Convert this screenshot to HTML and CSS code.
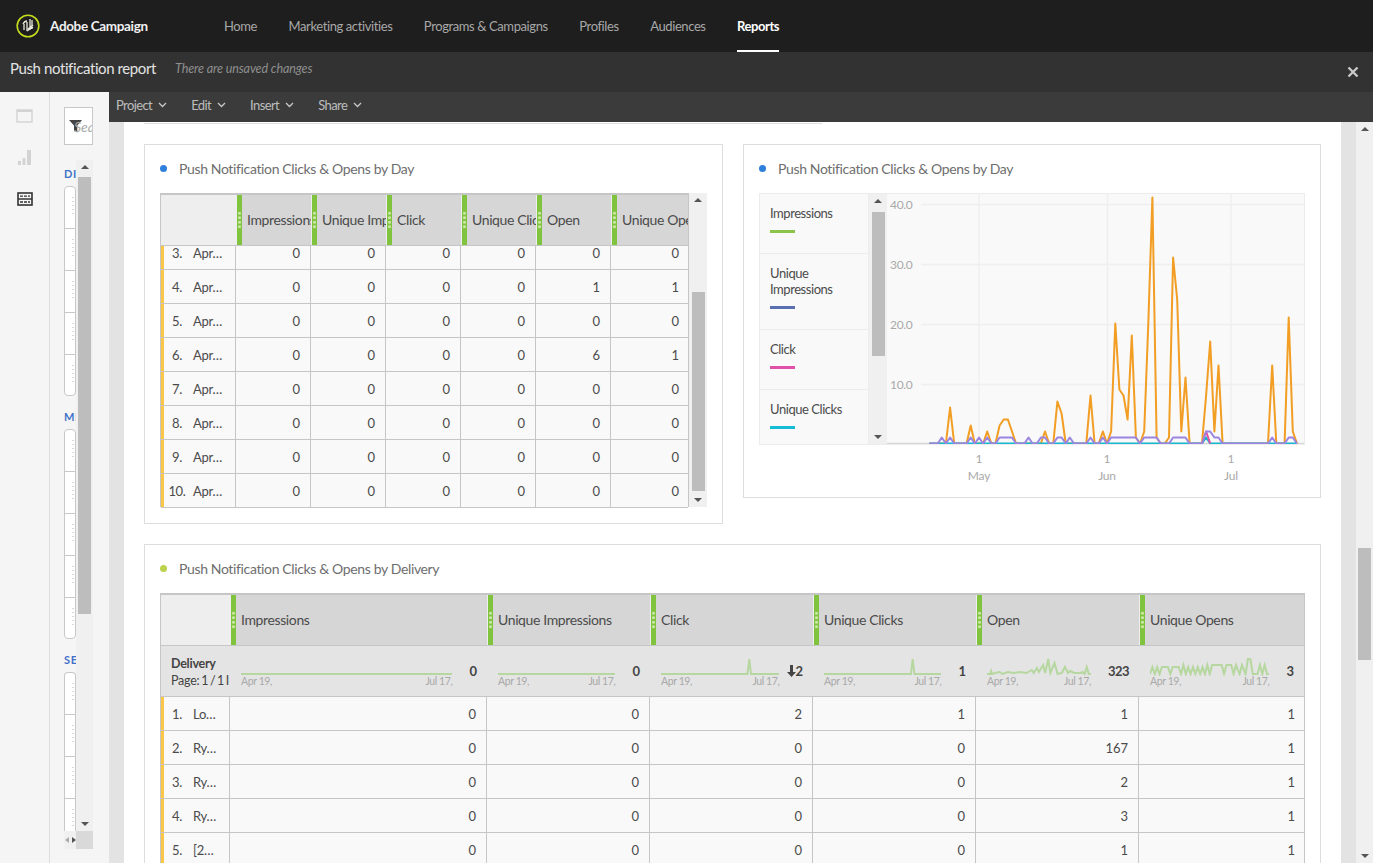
FILE: index.html
```html
<!DOCTYPE html>
<html lang="en">
<head>
<meta charset="utf-8">
<title>Push notification report</title>
<link rel="stylesheet" href="styles.css">
</head>
<body>
<header class="topbar">
  <div class="brand">
    <svg class="logo" width="24" height="24" viewBox="0 0 24 24"><circle cx="12" cy="12" r="10.8" fill="none" stroke="#c5dc1e" stroke-width="1.6"/><path d="M7 10c1-2 3-3 4-3M8 10v6M11 8v9M14 5v11M16 6v9M11 17l6-4M12 15l5-4" fill="none" stroke="#e8e8dc" stroke-width="1.3"/></svg>
    <span class="brand-name">Adobe Campaign</span>
  </div>
  <nav class="nav">
    <a>Home</a><a>Marketing activities</a><a>Programs &amp; Campaigns</a><a>Profiles</a><a>Audiences</a><a class="active">Reports</a>
  </nav>
</header>
<div class="titlebar">
  <span class="report-title">Push notification report</span>
  <span class="unsaved">There are unsaved changes</span>
  <svg class="close" width="12" height="12" viewBox="0 0 12 12"><path d="M1.5 1.5l9 9M10.5 1.5l-9 9" stroke="#c8c8c8" stroke-width="2.4"/></svg>
</div>
<div class="workspace">
  <aside class="rail">
    <svg class="rail-icon" width="17" height="14" viewBox="0 0 17 14"><rect x="1" y="1" width="15" height="12" fill="none" stroke="#d3d3d3" stroke-width="1.4"/><path d="M1 2h15" stroke="#d3d3d3" stroke-width="2"/></svg>
    <svg class="rail-icon" width="17" height="17" viewBox="0 0 17 17"><path d="M2 12h3v4H2zM6.5 9h3v7h-3zM11 1h4v15h-4z" fill="#d3d3d3"/></svg>
    <svg class="rail-icon" width="16" height="14" viewBox="0 0 16 14"><rect x="1" y="1" width="14" height="12" fill="none" stroke="#333" stroke-width="1.6"/><path d="M1 7h14" stroke="#333" stroke-width="1.5"/><path d="M3 4.2h10M3 10h10" stroke="#333" stroke-width="1.3" stroke-dasharray="3 1"/></svg>
  </aside>
  <aside class="panel">
    <div class="search">
      <svg width="14" height="14" viewBox="0 0 14 14"><path d="M0 1h13L8.3 6.5V13.5L5 12V6.5z" fill="#444"/></svg>
      <span class="search-text">Search</span>
    </div>
    <div class="panel-scroll">
      <div class="panel-list">
        <h4 class="section section-first">DIMENSIONS</h4>
        <div class="chips chips-full">
          <div class="chip"></div><div class="chip"></div><div class="chip"></div><div class="chip"></div><div class="chip"></div>
        </div>
        <h4 class="section">METRICS</h4>
        <div class="chips chips-full">
          <div class="chip"></div><div class="chip"></div><div class="chip"></div><div class="chip"></div><div class="chip"></div>
        </div>
        <h4 class="section">SEGMENTS</h4>
        <div class="chips">
          <div class="chip"></div><div class="chip"></div><div class="chip"></div><div class="chip"></div><div class="chip"></div>
        </div>
      </div>
      <div class="vscroll panel-vscroll">
        <span class="arrow-up"></span>
        <span class="panel-thumb"></span>
        <span class="arrow-down"></span>
      </div>
    </div>
    <div class="panel-hscroll">
      <span class="hs-left"></span><span class="hs-right"></span><span class="hs-corner"></span>
    </div>
  </aside>
  <div class="main">
    <div class="toolbar">
      <a class="menu">Project<svg width="9" height="6" viewBox="0 0 9 6"><path d="M1 1l3.5 3.5L8 1" fill="none" stroke="#c8c8c8" stroke-width="1.3"/></svg></a>
      <a class="menu">Edit<svg width="9" height="6" viewBox="0 0 9 6"><path d="M1 1l3.5 3.5L8 1" fill="none" stroke="#c8c8c8" stroke-width="1.3"/></svg></a>
      <a class="menu">Insert<svg width="9" height="6" viewBox="0 0 9 6"><path d="M1 1l3.5 3.5L8 1" fill="none" stroke="#c8c8c8" stroke-width="1.3"/></svg></a>
      <a class="menu">Share<svg width="9" height="6" viewBox="0 0 9 6"><path d="M1 1l3.5 3.5L8 1" fill="none" stroke="#c8c8c8" stroke-width="1.3"/></svg></a>
    </div>
    <div class="stage">
      <div class="gutter"></div>
      <div class="canvas">
        <div class="stub"></div>
        <div class="card-row">
          <section class="card card-table">
            <h3 class="card-title"><i class="dot dot-blue"></i>Push Notification Clicks &amp; Opens by Day</h3>
            <div class="table-wrap">
              <div class="table t1">
                <div class="row head t1-cols">
                  <div class="corner"></div>
                  <div class="hcell"><i class="grip"></i><span>Impressions</span></div>
                  <div class="hcell"><i class="grip"></i><span>Unique Impressions</span></div>
                  <div class="hcell"><i class="grip"></i><span>Click</span></div>
                  <div class="hcell"><i class="grip"></i><span>Unique Clicks</span></div>
                  <div class="hcell"><i class="grip"></i><span>Open</span></div>
                  <div class="hcell"><i class="grip"></i><span>Unique Opens</span></div>
                </div>
                <div class="rows-clip">
                  <div class="rows-offset">
                    <div class="row data t1-cols"><div class="label"><b>3.</b><span>Apr…</span></div><div>0</div><div>0</div><div>0</div><div>0</div><div>0</div><div>0</div></div>
                    <div class="row data t1-cols"><div class="label"><b>4.</b><span>Apr…</span></div><div>0</div><div>0</div><div>0</div><div>0</div><div>1</div><div>1</div></div>
                    <div class="row data t1-cols"><div class="label"><b>5.</b><span>Apr…</span></div><div>0</div><div>0</div><div>0</div><div>0</div><div>0</div><div>0</div></div>
                    <div class="row data t1-cols"><div class="label"><b>6.</b><span>Apr…</span></div><div>0</div><div>0</div><div>0</div><div>0</div><div>6</div><div>1</div></div>
                    <div class="row data t1-cols"><div class="label"><b>7.</b><span>Apr…</span></div><div>0</div><div>0</div><div>0</div><div>0</div><div>0</div><div>0</div></div>
                    <div class="row data t1-cols"><div class="label"><b>8.</b><span>Apr…</span></div><div>0</div><div>0</div><div>0</div><div>0</div><div>0</div><div>0</div></div>
                    <div class="row data t1-cols"><div class="label"><b>9.</b><span>Apr…</span></div><div>0</div><div>0</div><div>0</div><div>0</div><div>0</div><div>0</div></div>
                    <div class="row data t1-cols"><div class="label"><b>10.</b><span>Apr…</span></div><div>0</div><div>0</div><div>0</div><div>0</div><div>0</div><div>0</div></div>
                  </div>
                </div>
              </div>
              <div class="vscroll table-vscroll">
                <span class="arrow-up"></span>
                <span class="table-thumb"></span>
                <span class="arrow-down"></span>
              </div>
            </div>
          </section>
          <section class="card card-chart">
            <h3 class="card-title"><i class="dot dot-blue"></i>Push Notification Clicks &amp; Opens by Day</h3>
            <div class="chart">
              <div class="legend">
                <div class="legend-item li-1">Impressions<i class="swatch sw-green"></i></div>
                <div class="legend-item li-2">Unique Impressions<i class="swatch sw-indigo"></i></div>
                <div class="legend-item li-1">Click<i class="swatch sw-pink"></i></div>
                <div class="legend-item li-3">Unique Clicks<i class="swatch sw-cyan"></i></div>
              </div>
              <div class="vscroll legend-vscroll">
                <span class="arrow-up"></span>
                <span class="legend-thumb"></span>
                <span class="arrow-down"></span>
              </div>
              <div class="plot-wrap">
                <svg class="plot" width="418" height="250" viewBox="887 194 418 250">
                  <g stroke="#efefef" stroke-width="1.5">
                    <path d="M921 204.5H1305M921 264.5H1305M921 324.5H1305M921 384.5H1305M979 193V444M1107.5 193V444M1231 193V444"/>
                  </g>
                  <path d="M887 443.5H1305" stroke="#d8d8d8" stroke-width="1.5"/>
                  <g class="ylabels">
                    <text x="890" y="209">40.0</text>
                    <text x="890" y="269">30.0</text>
                    <text x="890" y="329">20.0</text>
                    <text x="890" y="389">10.0</text>
                  </g>
                  <g class="lines">
                    <polyline class="ln ln-orange" points="929.4,444 945.9,444 950.1,408 954.2,444 966.6,444 970.7,426 974.8,444 983.1,444 987.2,432 991.4,444 995.5,444 999.6,426 1003.7,420 1007.9,420 1012,432 1016.1,444 1040.9,444 1045,432 1049.2,444 1053.3,444 1057.4,402 1061.6,414 1065.7,444 1086.3,444 1090.5,396 1094.6,444 1098.7,444 1102.9,432 1107,444 1111.1,432 1115.3,324 1119.4,390 1123.5,396 1127.6,420 1131.8,336 1135.9,438 1140,444 1144.2,432 1148.3,324 1152.4,198 1156.6,438 1160.7,444 1164.8,444 1169,438 1173.1,258 1177.2,300 1181.3,432 1185.5,378 1189.6,444 1202,444 1206.1,396 1210.2,342 1214.4,432 1218.5,366 1222.6,444 1268,444 1272.2,366 1276.3,444 1284.6,444 1288.7,318 1292.8,432 1297,444"/>
                    <polyline class="ln ln-cyan" points="929.4,444 1202,444 1206.1,438 1210.2,444 1297,444"/>
                    <polyline class="ln ln-pink" points="1202,444 1206.1,432 1210.2,444"/>
                    <polyline class="ln ln-purple" points="929.4,444 937.7,444 941.8,438 945.9,444 950.1,438 954.2,444 966.6,444 970.7,438 974.8,444 979,438 983.1,444 987.2,438 991.4,444 995.5,444 999.6,438 1012,438 1016.1,444 1024.4,444 1028.5,438 1032.6,444 1036.8,444 1040.9,438 1045,438 1049.2,444 1053.3,444 1057.4,438 1061.6,438 1065.7,444 1069.8,438 1074,444 1086.3,444 1090.5,438 1094.6,444 1098.7,444 1102.9,438 1107,444 1111.1,438 1135.9,438 1140,444 1144.2,438 1156.6,438 1160.7,444 1169,444 1173.1,438 1185.5,438 1189.6,444 1202,444 1206.1,432 1210.2,432 1214.4,438 1218.5,438 1222.6,444 1268,444 1272.2,438 1276.3,444 1284.6,444 1288.7,438 1292.8,438 1297,444"/>
                  </g>
                </svg>
              </div>
            </div>
            <div class="axis">
              <span class="tick tick-may">1<br>May</span>
              <span class="tick tick-jun">1<br>Jun</span>
              <span class="tick tick-jul">1<br>Jul</span>
            </div>
          </section>
        </div>
        <section class="card card-wide">
          <h3 class="card-title"><i class="dot dot-lime"></i>Push Notification Clicks &amp; Opens by Delivery</h3>
          <div class="table t2">
            <div class="row head t2-cols">
              <div class="corner"></div>
              <div class="hcell"><i class="grip"></i><span>Impressions</span></div>
              <div class="hcell"><i class="grip"></i><span>Unique Impressions</span></div>
              <div class="hcell"><i class="grip"></i><span>Click</span></div>
              <div class="hcell"><i class="grip"></i><span>Unique Clicks</span></div>
              <div class="hcell"><i class="grip"></i><span>Open</span></div>
              <div class="hcell"><i class="grip"></i><span>Unique Opens</span></div>
            </div>
            <div class="row summary t2-cols">
              <div class="sum-label"><strong>Delivery</strong><span>Page: 1 / 1 I</span></div>
              <div class="sum-cell">
                <div class="spark"><svg viewBox="0 0 100 18" preserveAspectRatio="none"><polyline points="0,16 100,16"/></svg><div class="dates"><span>Apr 19,</span><span>Jul 17,</span></div></div>
                <b>0</b>
              </div>
              <div class="sum-cell">
                <div class="spark"><svg viewBox="0 0 100 18" preserveAspectRatio="none"><polyline points="0,16 100,16"/></svg><div class="dates"><span>Apr 19,</span><span>Jul 17,</span></div></div>
                <b>0</b>
              </div>
              <div class="sum-cell sum-tight">
                <div class="spark"><svg viewBox="0 0 100 18" preserveAspectRatio="none"><polyline points="0,16 73,16 74.5,1 76,16 100,16"/></svg><div class="dates"><span>Apr 19,</span><span>Jul 17,</span></div></div>
                <b><svg class="down" width="9" height="12" viewBox="0 0 9 12"><path d="M3 0h3v7h3l-4.5 5L0 7h3z" fill="#444"/></svg>2</b>
              </div>
              <div class="sum-cell">
                <div class="spark"><svg viewBox="0 0 100 18" preserveAspectRatio="none"><polyline points="0,16 74,16 75.5,1 77,16 100,16"/></svg><div class="dates"><span>Apr 19,</span><span>Jul 17,</span></div></div>
                <b>1</b>
              </div>
              <div class="sum-cell">
                <div class="spark"><svg viewBox="0 0 100 18" preserveAspectRatio="none"><polyline points="0,16 3,16 4,13 5,16 8,15 12,14 15,16 20,14 26,15 32,14 38,15 43,12 45,15 48,10 50,14 54,7 56,15 59,1 61,15 65,5 68,16 72,15 75,9 78,15 80,13 84,15 90,15 92,14 94,16 96,9 98,16 100,16"/></svg><div class="dates"><span>Apr 19,</span><span>Jul 17,</span></div></div>
                <b class="num-tight">323</b>
              </div>
              <div class="sum-cell sum-last">
                <div class="spark"><svg viewBox="0 0 100 18" preserveAspectRatio="none"><polyline points="0,16 2,9 4,16 6,9 8,16 10,9 15,9 17,16 19,9 24,9 26,16 28,7 30,16 32,9 34,16 36,9 38,16 40,9 42,16 44,9 46,16 48,7 50,16 52,7 60,7 62,16 64,7 68,7 70,16 72,7 75,16 77,7 80,16 82,1 84,1 86,16 90,16 92,7 94,16 96,7 98,16 100,16"/></svg><div class="dates"><span>Apr 19,</span><span>Jul 17,</span></div></div>
                <b>3</b>
              </div>
            </div>
            <div class="row data t2-cols"><div class="label"><b>1.</b><span>Lo…</span></div><div>0</div><div>0</div><div>2</div><div>1</div><div>1</div><div>1</div></div>
            <div class="row data t2-cols"><div class="label"><b>2.</b><span>Ry…</span></div><div>0</div><div>0</div><div>0</div><div>0</div><div>167</div><div>1</div></div>
            <div class="row data t2-cols"><div class="label"><b>3.</b><span>Ry…</span></div><div>0</div><div>0</div><div>0</div><div>0</div><div>2</div><div>1</div></div>
            <div class="row data t2-cols"><div class="label"><b>4.</b><span>Ry…</span></div><div>0</div><div>0</div><div>0</div><div>0</div><div>3</div><div>1</div></div>
            <div class="row data t2-cols"><div class="label"><b>5.</b><span>[2…</span></div><div>0</div><div>0</div><div>0</div><div>0</div><div>1</div><div>1</div></div>
          </div>
        </section>
      </div>
      <div class="gutter"></div>
      <div class="vscroll page-vscroll">
        <span class="arrow-up"></span>
        <span class="page-thumb"></span>
        <span class="arrow-down"></span>
      </div>
    </div>
  </div>
</div>
</body>
</html>
```
FILE: styles.css
```css
* { box-sizing: border-box; }
html, body { margin: 0; height: 100%; }
body {
  display: flex;
  flex-direction: column;
  height: 863px;
  overflow: hidden;
  font-family: "Lato", "Open Sans", sans-serif;
  font-size: 13px;
  color: #4b4b4b;
  background: #fff;
}
/* top bar */
.topbar {
  flex: 0 0 52px;
  display: flex;
  align-items: stretch;
  background: #1e1e1e;
}
.brand {
  width: 224px;
  display: flex;
  align-items: center;
  padding-left: 16px;
  gap: 10px;
}
.brand-name { color: #f0f0f0; font-size: 13.5px; font-weight: 700; letter-spacing: -.35px; }
.nav { display: flex; gap: 31.5px; }
.nav a {
  display: flex;
  align-items: center;
  color: #a8a8a8;
  font-size: 13px;
  letter-spacing: -.4px;
  border-bottom: 2px solid transparent;
  border-top: 2px solid transparent;
}
.nav a.active { color: #fff; font-weight: 700; border-bottom-color: #fff; letter-spacing: -.45px; }
/* title bar */
.titlebar {
  flex: 0 0 40px;
  display: flex;
  align-items: center;
  background: #323232;
  padding: 0 14px 8px 10px;
}
.report-title { color: #e3e3e3; font-size: 15px; letter-spacing: -.4px; }
.unsaved { color: #8f8f8f; font-style: italic; font-size: 12.5px; margin-left: 19px; letter-spacing: -.1px; }
.close { margin-left: auto; margin-top: 8px; }
/* workspace */
.workspace { flex: 1; display: flex; min-height: 0; }
.rail {
  flex: 0 0 50px;
  background: #f5f5f5;
  border-right: 1px solid #ddd;
  display: flex;
  flex-direction: column;
  align-items: center;
  padding: 17px 0 0 0;
  gap: 26px;
}
.panel {
  flex: 0 0 59px;
  background: #f5f5f5;
  padding: 15px 0 0 14px;
  display: flex;
  flex-direction: column;
}
.search {
  width: 29px;
  height: 38px;
  flex: none;
  background: #fff;
  border: 1px solid #c8c8c8;
  display: flex;
  align-items: center;
  padding-left: 4px;
  overflow: hidden;
  white-space: nowrap;
}
.search svg { flex: none; margin-right: -9px; }
.search-text { color: #aaa; font-style: italic; font-size: 14px; }
.panel-scroll {
  margin-top: 15px;
  width: 29px;
  height: 671px;
  flex: none;
  display: flex;
}
.panel-list { width: 12px; flex: none; overflow: hidden; }
.section {
  margin: 0;
  width: 60px;
  height: 33px;
  padding-top: 14px;
  color: #3f72c8;
  font-size: 11px;
  font-weight: 700;
  letter-spacing: .6px;
  line-height: 14px;
}
.section-first { height: 26px; padding-top: 7px; }
.chips {
  width: 12px;
  border: 1px solid #c8c8c8;
  border-bottom: 0;
  border-radius: 4px 4px 0 0;
  background: #fff;
}
.chips-full { border-bottom: 1px solid #c8c8c8; border-radius: 4px; }
.chip {
  height: 42px;
  border-bottom: 1px solid #c8c8c8;
  background: repeating-linear-gradient(#d8d8d8 0 1px, transparent 1px 4px) 7px 10px / 2px 20px no-repeat;
}
.chips-full .chip:last-child { border-bottom: 0; height: 40px; }
.vscroll {
  position: relative;
  background: #f0f0f0;
  flex: none;
  display: flex;
  flex-direction: column;
  align-items: center;
}
.arrow-up, .arrow-down {
  position: absolute;
  left: 50%;
  margin-left: -4px;
  width: 0; height: 0;
  border-left: 4px solid transparent;
  border-right: 4px solid transparent;
}
.arrow-up { top: 5px; border-bottom: 4px solid #555; }
.arrow-down { bottom: 5px; border-top: 4px solid #555; }
.panel-vscroll { width: 17px; }
.panel-thumb { width: 13px; height: 437px; margin-top: 17px; background: #bdbdbd; }
.panel-hscroll {
  width: 29px;
  height: 18px;
  flex: none;
  display: flex;
  align-items: center;
  background: #f0f0f0;
}
.hs-left, .hs-right { width: 0; height: 0; border-top: 3.5px solid transparent; border-bottom: 3.5px solid transparent; }
.hs-left { border-right: 4px solid #aaa; margin-left: 1px; }
.hs-right { border-left: 4px solid #555; margin-left: 3px; }
.hs-corner { width: 17px; height: 18px; margin-left: auto; background: #d9d9d9; }
/* main */
.main { flex: 1; min-width: 0; display: flex; flex-direction: column; }
.toolbar {
  flex: 0 0 30px;
  display: flex;
  align-items: center;
  background: #3b3b3b;
  padding: 0 0 4px 7px;
  gap: 24px;
}
.menu { display: flex; align-items: center; gap: 6px; color: #bdbdbd; font-size: 13px; letter-spacing: -.6px; }
.stage { flex: 1; min-height: 0; display: flex; }
.gutter { flex: 0 0 15px; background: #e3e3e3; }
.canvas {
  width: 1217px;
  flex: none;
  background: #fff;
  padding: 0 20px;
  overflow: hidden;
}
.page-vscroll { width: 17px; }
.page-thumb { width: 13px; height: 112px; margin-top: 426px; background: #bdbdbd; }
.stub { width: 678px; height: 2px; border-bottom: 1px solid #ddd; margin-bottom: 20px; }
.card-row { display: flex; gap: 20px; align-items: flex-start; margin-bottom: 20px; }
.card { border: 1px solid #ddd; background: #fff; padding: 0 15px; }
.card-table { width: 579px; height: 380px; }
.card-chart { width: 578px; height: 354px; }
.card-wide { width: 1177px; height: 400px; }
.card-title {
  margin: 0;
  height: 48px;
  padding-bottom: 2px;
  display: flex;
  align-items: center;
  font-size: 14px;
  font-weight: 400;
  letter-spacing: -.36px;
  color: #6e6e6e;
}
.dot { width: 7px; height: 7px; border-radius: 50%; margin-right: 12px; flex: none; }
.dot-blue { background: #2f7fdc; }
.dot-lime { background: #bcd24c; }
/* tables */
.table-wrap { display: flex; width: 547px; }
.table { border: 1px solid #c6c6c6; border-top-width: 2px; }
.t1 { width: 529px; height: 314px; }
.t2 { width: 1145px; height: 400px; }
.row { display: grid; }
.t1-cols { grid-template-columns: 75px repeat(5, 75px) 77px; }
.t2-cols { grid-template-columns: 69px 257px 163px 163px 163px 163px 167px; }
.head { height: 51px; border-bottom: 1px solid #c6c6c6; background: #d6d6d6; }
.corner { background: #eee; }
.hcell {
  display: flex;
  align-items: center;
  padding-left: 1px;
  background: linear-gradient(#eee, #eee) 0 0 / 1px 100% no-repeat;
  overflow: hidden;
  font-size: 14px;
  letter-spacing: -.38px;
  white-space: nowrap;
  color: #4b4b4b;
}
.hcell span { padding-bottom: 2px; }
.grip {
  flex: none;
  width: 5px;
  height: 100%;
  margin-right: 5px;
  background: #80c33f;
  display: flex;
  align-items: center;
}
.grip::before {
  content: "";
  display: block;
  width: 5px;
  height: 18px;
  background: radial-gradient(circle at center, #cde8a8 1.2px, transparent 1.7px) 0 0 / 5px 4.5px repeat-y;
}
.rows-clip { height: 262px; overflow: hidden; }
.rows-offset { margin-top: -10px; }
.data { height: 34px; background: #f9f9f9; border-bottom: 1px solid #c6c6c6; font-size: 13px; }
.data > div {
  display: flex;
  align-items: center;
  justify-content: flex-end;
  padding-right: 10px;
  border-right: 1px solid #c6c6c6;
}
.data > div:last-child { border-right: 0; }
.t1-cols.data > div:last-child { padding-right: 9px; }
.t2-cols.data > div:last-child { padding-right: 11px; }
.data > .label {
  justify-content: flex-start;
  padding: 0;
  background: linear-gradient(#f9c648, #f9c648) 0 0 / 3px 100% no-repeat;
  white-space: nowrap;
  overflow: hidden;
  letter-spacing: -.3px;
}
.label b { font-weight: 400; width: 32px; text-align: center; flex: none; }
.vscroll.table-vscroll { width: 18px; height: 314px; }
.table-thumb { width: 13px; height: 199px; margin-top: 99px; background: #bdbdbd; }
/* chart */
.chart { display: flex; height: 252px; width: 546px; border: 1px solid #ececec; background: #f9f9f9; }
.legend { width: 109px; flex: none; border-right: 1px solid #ececec; }
.legend-item {
  padding: 11px 8px 0 10px;
  line-height: 16px;
  font-size: 13px;
  letter-spacing: -.45px;
  border-bottom: 1px solid #ececec;
}
.li-1 { height: 60px; }
.li-2 { height: 76px; }
.li-3 { height: 56px; border-bottom: 0; }
.swatch { display: block; width: 25px; height: 3px; margin-top: 9px; }
.sw-green { background: #8cc34a; }
.sw-indigo { background: #5a6fb0; }
.sw-pink { background: #e04fa8; }
.sw-cyan { background: #15bcd6; }
.vscroll.legend-vscroll { width: 18px; }
.legend-thumb { width: 13px; height: 144px; margin-top: 18px; background: #bdbdbd; }
.plot-wrap { flex: 1; overflow: hidden; }
.plot { display: block; }
.ylabels text { fill: #a9a9a9; font-size: 12px; font-family: "Lato", sans-serif; letter-spacing: -.3px; }
.lines { transform: translateY(-.5px); }
.ln { fill: none; stroke-width: 2; stroke-linejoin: round; }
.ln-orange { stroke: #f29d23; }
.ln-cyan { stroke: #15b9d1; }
.ln-pink { stroke: #e04fa8; }
.ln-purple { stroke: #9b85e0; }
.axis { display: flex; height: 38px; font-size: 12px; color: #a9a9a9; text-align: center; line-height: 17px; letter-spacing: -.2px; }
.tick { width: 40px; padding-top: 5px; }
.tick-may { margin-left: 200px; }
.tick-jun { margin-left: 88px; }
.tick-jul { margin-left: 84px; }
/* summary */
.summary { height: 51px; background: #e4e4e4; border-bottom: 1px solid #c6c6c6; }
.sum-label {
  padding: 9px 0 0 10px;
  font-size: 12.5px;
  line-height: 17px;
  letter-spacing: -.25px;
  word-spacing: -1.2px;
  overflow: hidden;
  white-space: nowrap;
  color: #444;
}
.sum-label strong, .sum-label span { display: block; }
.sum-cell {
  display: flex;
  align-items: flex-start;
  gap: 17px;
  padding: 0 10px 0 11px;
  min-width: 0;
}
.sum-tight { gap: 8px; }
.sum-last { padding-right: 12px; }
.sum-cell > b {
  font-weight: 700;
  font-size: 13px;
  color: #444;
  margin-top: 17px;
  display: flex;
  align-items: center;
  flex: none;
}
.sum-cell > b.num-tight { letter-spacing: -.5px; }
.down { margin-right: -1px; }
.spark { flex: 1; min-width: 0; padding-top: 12px; }
.spark svg { display: block; width: 100%; height: 18px; }
.spark polyline { fill: none; stroke: #b6d79f; stroke-width: 2; vector-effect: non-scaling-stroke; }
.dates { display: flex; justify-content: space-between; font-size: 10.5px; color: #a9a9a9; line-height: 12px; margin-top: -1px; letter-spacing: -.4px; }
```
